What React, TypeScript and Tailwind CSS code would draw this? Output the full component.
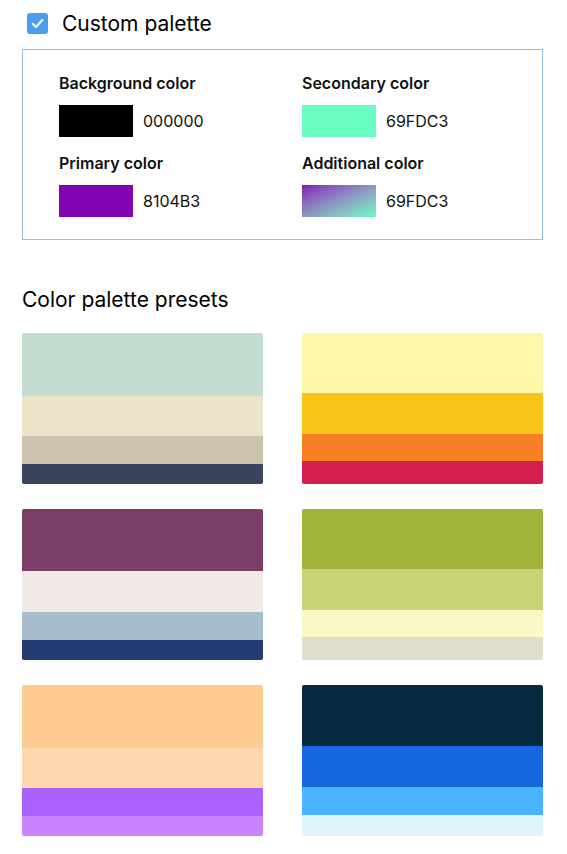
import React, { useState } from 'react';

type Band = { color: string; h: number };

const presets: Band[][] = [
  [
    { color: '#c3ded1', h: 63 },
    { color: '#ebe4c8', h: 40 },
    { color: '#cdc2ae', h: 28 },
    { color: '#39455c', h: 20 },
  ],
  [
    { color: '#fdf8a8', h: 60 },
    { color: '#fac319', h: 41 },
    { color: '#f68023', h: 27 },
    { color: '#d51e4f', h: 23 },
  ],
  [
    { color: '#7b3f66', h: 62 },
    { color: '#f3e9e7', h: 41 },
    { color: '#a6bdcb', h: 28 },
    { color: '#243b73', h: 20 },
  ],
  [
    { color: '#a0b23c', h: 60 },
    { color: '#c8d473', h: 41 },
    { color: '#fcf8c6', h: 27 },
    { color: '#e0ddca', h: 23 },
  ],
  [
    { color: '#fecb90', h: 63 },
    { color: '#fed7ae', h: 40 },
    { color: '#a962fe', h: 28 },
    { color: '#cc84fe', h: 20 },
  ],
  [
    { color: '#082a3e', h: 61 },
    { color: '#1766df', h: 41 },
    { color: '#48b5fe', h: 28 },
    { color: '#e0f4fe', h: 21 },
  ],
];

function ColorField({
  label,
  value,
  swatch,
}: {
  label: string;
  value: string;
  swatch: string;
}) {
  return (
    <div>
      <p className="text-[16px] leading-5 font-semibold text-[#111]">{label}</p>
      <div className="flex items-center mt-3">
        <div className={`w-[74px] h-8 shrink-0 ${swatch}`} />
        <span className="ml-[10px] text-[16px] text-[#111]">{value}</span>
      </div>
    </div>
  );
}

function App() {
  const [custom, setCustom] = useState<boolean>(true);

  return (
    <div className="min-h-screen bg-white font-['Inter','Liberation_Sans',sans-serif] text-black">
      <div className="ml-[22px] w-[521px] pt-[13px]">
        <label className="flex items-center cursor-pointer">
          <button
            onClick={() => setCustom(!custom)}
            className="ml-[5px] w-[21px] h-[21px] shrink-0 rounded-[3px] bg-[#4a9eec] flex items-center justify-center"
          >
            {custom && (
              <svg width="15" height="15" viewBox="0 0 14 14" fill="none">
                <path
                  d="M2.5 7.3 L5.6 10.2 L11.5 3.8"
                  stroke="white"
                  strokeWidth="2"
                  strokeLinecap="round"
                  strokeLinejoin="round"
                />
              </svg>
            )}
          </button>
          <span className="ml-[14px] text-[21px] leading-[21px]">Custom palette</span>
        </label>

        <div className="mt-[15px] border border-[#8fc0ef] pl-9 pt-[23px] pb-[22px]">
          <div className="grid grid-cols-[243px_1fr] gap-y-4">
            <ColorField label="Background color" value="000000" swatch="bg-black" />
            <ColorField label="Secondary color" value="69FDC3" swatch="bg-[#69fdc3]" />
            <ColorField label="Primary color" value="8104B3" swatch="bg-[#8104b3]" />
            <ColorField
              label="Additional color"
              value="69FDC3"
              swatch="bg-gradient-to-br from-[#8104b3] to-[#69fdc3]"
            />
          </div>
        </div>

        <h2 className="mt-[46px] text-[21px] leading-7">Color palette presets</h2>

        <div className="mt-[19px] grid grid-cols-2 gap-x-[39px] gap-y-[25px]">
          {presets.map((bands, i) => (
            <div key={i} className="rounded-[2px] overflow-hidden w-[241px] flex flex-col">
              {bands.map((b, j) => (
                <div key={j} style={{ backgroundColor: b.color, height: b.h }} />
              ))}
            </div>
          ))}
        </div>
      </div>
    </div>
  );
}

export default App;
